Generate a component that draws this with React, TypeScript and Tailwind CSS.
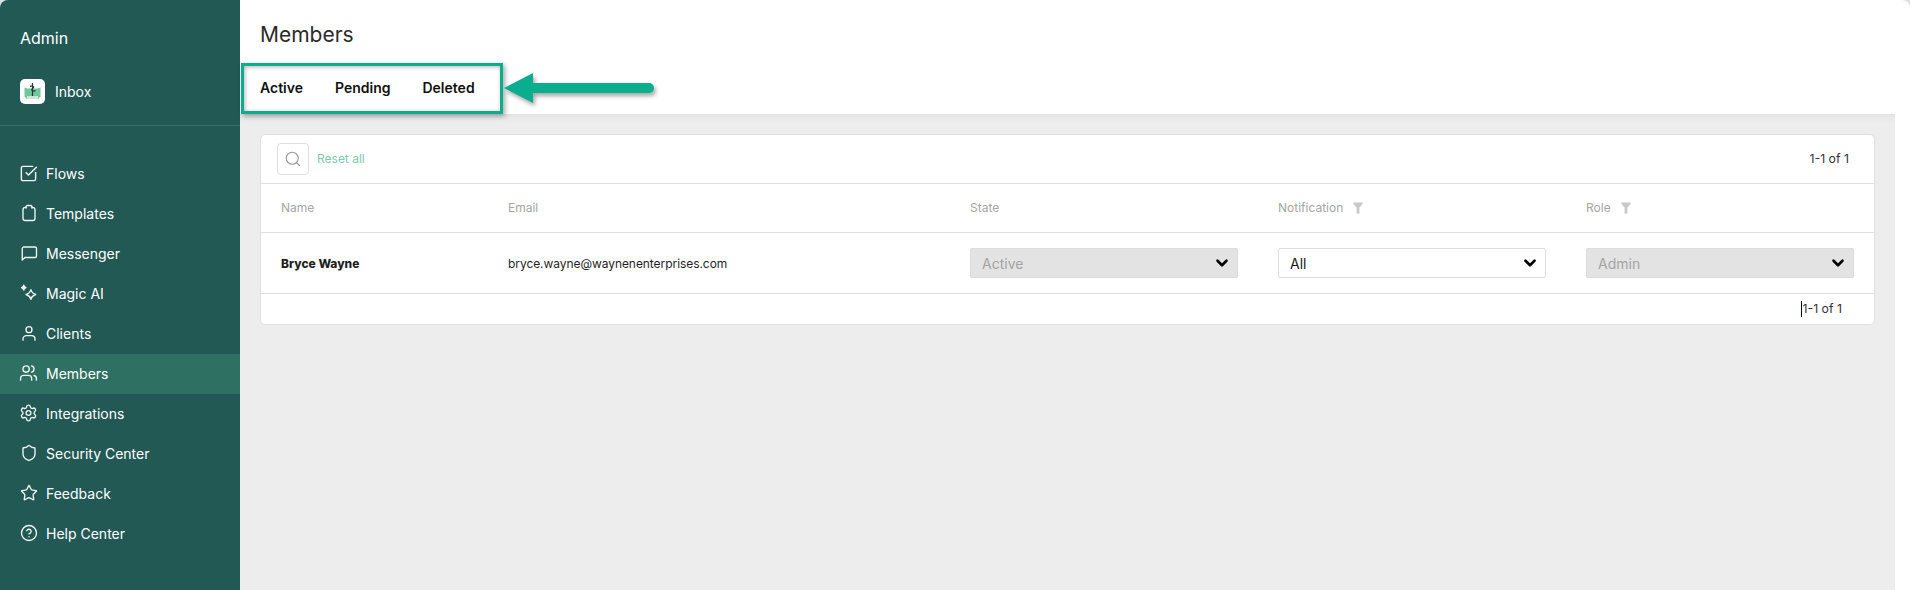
import { ChevronDown, CircleHelp, Search, Settings, Shield, SquareCheckBig, Star, Users } from "lucide-react";
import type { ReactNode } from "react";

function NavGlyph({ children }: { children: ReactNode }) {
  return (
    <svg width="18" height="18" viewBox="0 0 24 24" fill="none" stroke="currentColor" strokeWidth="1.8" strokeLinecap="round" strokeLinejoin="round">
      {children}
    </svg>
  );
}

const navItems: { label: string; icon: ReactNode; active?: boolean }[] = [
  { label: "Flows", icon: <SquareCheckBig size={19} strokeWidth={1.8} /> },
  {
    label: "Templates",
    icon: (
      <NavGlyph>
        <path d="M8 4.5H7a3 3 0 0 0-3 3v11.5a3 3 0 0 0 3 3h10a3 3 0 0 0 3-3V7.5a3 3 0 0 0-3-3h-1" />
        <path d="M8 5.5V4a2 2 0 0 1 2-2h4a2 2 0 0 1 2 2v1.5" />
      </NavGlyph>
    ),
  },
  {
    label: "Messenger",
    icon: (
      <NavGlyph>
        <path d="M3 21.5V6a2 2 0 0 1 2-2h15a2 2 0 0 1 2 2v10a2 2 0 0 1-2 2H6.5z" />
      </NavGlyph>
    ),
  },
  {
    label: "Magic AI",
    icon: (
      <NavGlyph>
        <path d="M14.5 7.5c.8 3.4 2.6 5.2 6.5 6.5-3.9 1.3-5.7 3.1-6.5 6.5-.8-3.4-2.6-5.2-6.5-6.5 3.9-1.3 5.7-3.1 6.5-6.5z" />
        <path d="M5 1.5c.4 1.9 1.2 2.7 3 3.3-1.8.6-2.6 1.4-3 3.2-.4-1.8-1.2-2.6-3-3.2 1.8-.6 2.6-1.4 3-3.3z" fill="currentColor" />
      </NavGlyph>
    ),
  },
  {
    label: "Clients",
    icon: (
      <NavGlyph>
        <circle cx="12" cy="7.5" r="4" />
        <path d="M4 21.5v-1.5a4.5 4.5 0 0 1 4.5-4.5h7a4.5 4.5 0 0 1 4.5 4.5v1.5" />
      </NavGlyph>
    ),
  },
  { label: "Members", icon: <Users size={20} strokeWidth={1.7} />, active: true },
  { label: "Integrations", icon: <Settings size={20} strokeWidth={1.7} /> },
  { label: "Security Center", icon: <Shield size={18} strokeWidth={1.8} /> },
  { label: "Feedback", icon: <Star size={18} strokeWidth={1.8} /> },
  { label: "Help Center", icon: <CircleHelp size={18} strokeWidth={1.8} /> },
];

function FunnelMark() {
  return (
    <svg width="10" height="12" viewBox="0 0 10 12" className="ml-[10px] text-[#c8c8c8]">
      <path d="M0.5 0.5h9v1.6L6.4 5.6V11.5H3.6V5.6L0.5 2.1z" fill="currentColor" />
    </svg>
  );
}

function SelectBox({ value, disabled }: { value: string; disabled?: boolean }) {
  return (
    <div
      className={`flex h-[30px] w-[268px] items-center justify-between rounded-[2px] border pl-[11px] pr-[6px] text-[14px] ${
        disabled ? "border-[#dcdcdc] bg-[#e3e3e3] text-[#a3a3a3]" : "border-[#dedede] bg-white text-[#1a1a1a]"
      }`}
    >
      {value}
      <ChevronDown size={18} strokeWidth={3.5} className="text-black" />
    </div>
  );
}

export default function App() {
  return (
    <div className="relative flex h-[590px] w-[1910px] overflow-hidden bg-[#d4e4e2] font-['Inter',sans-serif]">
      <aside className="flex h-full w-[240px] shrink-0 flex-col rounded-tl-[8px] bg-[#225955] text-white">
        <div className="flex h-[126px] flex-col border-b border-[#3c7068] px-5">
          <div className="mt-[28px] text-[16px] leading-[20px]">Admin</div>
          <div className="mt-[31px] flex items-center gap-[10px]">
            <div className="flex h-[25px] w-[25px] items-center justify-center rounded-[5px] bg-white">
              <svg width="19" height="19" viewBox="0 0 19 19">
                <path d="M1.5 5.5l3 1h10l3-1v9l-2.5 2.5H4l-2.5-2.5z" fill="#6fc89b" />
                <path d="M4 14h11v3H4z" fill="#c9e9d6" />
                <path d="M9.5 1v13M7 4.5c3-1.5 5 .5 2.5 2-2 1.5.5 3.5 3 2" stroke="#26363a" strokeWidth="1.2" fill="none" />
              </svg>
            </div>
            <span className="text-[14px]">Inbox</span>
          </div>
        </div>
        <nav className="mt-[28px] flex flex-col">
          {navItems.map((item) => (
            <div
              key={item.label}
              className={`flex h-[40px] items-center gap-[8px] pb-[2px] pl-[19px] text-[14px] ${item.active ? "bg-[#2e7162]" : ""}`}
            >
              <span className="flex w-[19px] justify-center text-[#f2f6f5]">{item.icon}</span>
              {item.label}
            </div>
          ))}
        </nav>
      </aside>

      <main className="flex min-w-0 flex-1 flex-col rounded-tr-[8px] bg-white">
        <div className="h-[114px] shrink-0 pl-[20px]">
          <h1 className="pt-[21px] text-[21px] font-normal leading-[28px] text-[#2b2b2b]">Members</h1>
        </div>
        <div className="mr-[15px] flex-1 bg-[#ededed] px-[20px] pt-[20px] shadow-[inset_0_10px_10px_-8px_rgba(0,0,0,0.06)]">
          <div className="h-[191px] rounded-[5px] border border-[#e0e0e0] bg-white">
            <div className="flex h-[49px] items-center justify-between border-b border-[#e0e0e0] pl-[16px] pr-[25px]">
              <div className="flex items-center gap-2">
                <div className="flex h-[32px] w-[32px] items-center justify-center rounded-[4px] border border-[#e0e0e0] text-[#9a9a9a]">
                  <Search size={18} strokeWidth={1.5} />
                </div>
                <span className="text-[12px] text-[#7dc9ad]">Reset all</span>
              </div>
              <span className="text-[12.3px] text-[#333]">1-1 of 1</span>
            </div>
            <div className="flex h-[49px] items-center border-b border-[#e0e0e0] text-[12px] text-[#a5a5a5]">
              <span className="ml-[20px] w-[227px]">Name</span>
              <span className="w-[462px]">Email</span>
              <span className="w-[308px]">State</span>
              <span className="flex w-[308px] items-center">Notification<FunnelMark /></span>
              <span className="flex items-center">Role<FunnelMark /></span>
            </div>
            <div className="flex h-[61px] items-center border-b border-[#e0e0e0] text-[12px] text-[#1f1f1f]">
              <span className="ml-[20px] w-[227px] pt-[1px] font-extrabold">Bryce Wayne</span>
              <span className="w-[462px] pt-[1px] tracking-[-0.06px]">bryce.wayne@waynenenterprises.com</span>
              <div className="w-[308px]"><SelectBox value="Active" disabled /></div>
              <div className="w-[308px]"><SelectBox value="All" /></div>
              <SelectBox value="Admin" disabled />
            </div>
            <div className="flex h-[30px] items-center justify-end pr-[32px] text-[12.3px] text-[#333]">
              <span className="border-l border-black leading-[16px]">1-1 of 1</span>
            </div>
          </div>
        </div>
      </main>

      {/* annotation drawn over the screenshot */}
      <div className="absolute left-[241px] top-[63px] h-[51px] w-[262px] border-[3px] border-[#0aad8d] shadow-[2px_2px_5px_rgba(0,0,0,0.35),inset_1px_1px_4px_rgba(0,0,0,0.3)]">
        <div className="flex h-full items-center gap-[32px] pb-[3px] pl-[16px] text-[14px] font-semibold text-[#111]">
          <span>Active</span>
          <span>Pending</span>
          <span>Deleted</span>
        </div>
      </div>
      <svg width="164" height="44" viewBox="0 0 164 44" className="absolute left-[500px] top-[68px] drop-shadow-[2px_3px_2px_rgba(0,0,0,0.35)]">
        <path d="M4 20L33 5V15H149a5 5 0 0 1 0 10H33V35z" fill="#0aad8d" />
      </svg>
    </div>
  );
}
